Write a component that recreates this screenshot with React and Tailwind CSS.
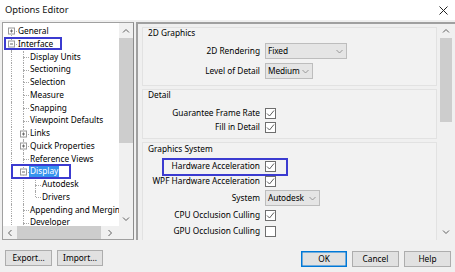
import React from "react";

const LINE = "border-[#a8a8a8] border-dotted";

function PMBox({ sign }) {
  return (
    <div className="absolute left-[3px] top-1/2 -translate-y-1/2 w-[7px] h-[7px] border border-[#9a9a9a] bg-white flex items-center justify-center">
      <div className="relative w-[3px] h-[3px] flex items-center justify-center">
        <div className="w-[3px] h-[1px] bg-[#6a6a6a]" />
        {sign === "+" && <div className="absolute left-[1px] top-0 w-[1px] h-[3px] bg-[#6a6a6a]" />}
      </div>
    </div>
  );
}

function TreeRow({ label, guides = [], first, last, box, selected }) {
  return (
    <div className="flex h-[12.77px] whitespace-nowrap shrink-0">
      {guides.map((g, i) => (
        <div key={i} className="relative w-[12px] shrink-0">
          {g && <div className={`absolute left-[6px] top-0 bottom-0 border-l ${LINE}`} />}
        </div>
      ))}
      <div className="relative w-[12px] shrink-0">
        {!first && <div className={`absolute left-[6px] top-0 h-1/2 border-l ${LINE}`} />}
        {!last && <div className={`absolute left-[6px] top-1/2 bottom-0 border-l ${LINE}`} />}
        <div className={`absolute left-[7px] right-0 top-1/2 border-t ${LINE}`} />
        {box && <PMBox sign={box} />}
      </div>
      <span
        className={
          selected
            ? "ml-[0px] px-[1px] leading-[12.77px] bg-[#3593ee] text-white"
            : "ml-[1px] leading-[12.77px] text-black"
        }
      >
        {label}
      </span>
    </div>
  );
}

function Chevron({ dir = "down", color = "#707070" }) {
  const d = {
    up: "M1 4.5 L4 1.5 L7 4.5",
    down: "M1 1.5 L4 4.5 L7 1.5",
    left: "M4.5 1 L1.5 4 L4.5 7",
    right: "M1.5 1 L4.5 4 L1.5 7",
  }[dir];
  const vert = dir === "up" || dir === "down";
  return (
    <svg width={vert ? 8 : 6} height={vert ? 6 : 8} viewBox={vert ? "0 0 8 6" : "0 0 6 8"}>
      <path d={d} fill="none" stroke={color} strokeWidth="1" />
    </svg>
  );
}

function SmallChevron() {
  return (
    <svg width="7" height="5" viewBox="0 0 7 5">
      <path d="M0.5 1 L3.5 4 L6.5 1" fill="none" stroke="#8f8f8f" strokeWidth="0.9" />
    </svg>
  );
}

function Check({ checked }) {
  return (
    <div className="w-[11px] h-[11px] border border-[#6e6e6e] bg-white flex items-center justify-center">
      {checked && (
        <svg width="9" height="9" viewBox="0 0 9 9">
          <path d="M1 4.5 L3.5 7 L8 1.5" fill="none" stroke="#5c5c5c" strokeWidth="1" />
        </svg>
      )}
    </div>
  );
}

function Select({ value, w }) {
  return (
    <div className={`${w} h-[16px] bg-[#e5e5e5] border border-[#bdbdbd] flex items-center justify-between pl-[2px] pr-[3px]`}>
      <span className="leading-none tracking-[-0.1px]">{value}</span>
      <SmallChevron />
    </div>
  );
}

function Row({ label, h, children }) {
  return (
    <div className={`flex items-center ${h}`}>
      <div className="w-[117px] shrink-0 text-right whitespace-nowrap">{label}</div>
      <div className="ml-[5px] flex items-center">{children}</div>
    </div>
  );
}

function Btn({ children, w, primary }) {
  return (
    <div
      className={`${w} h-[16px] flex items-center justify-center bg-[#e1e1e1] border ${
        primary ? "border-[#0078d7] shadow-[inset_0_0_0_0.5px_#0078d7]" : "border-[#adadad]"
      }`}
    >
      {children}
    </div>
  );
}

export default function App() {
  return (
    <div className="relative w-[455px] h-[272px] overflow-hidden bg-[#f0f0f0] font-['Noto_Sans',sans-serif] text-[8.3px] text-black flex flex-col">
      {/* Title bar */}
      <div className="h-[20px] bg-white flex items-center justify-between pl-[5px] pr-[7px] shrink-0">
        <span className="text-[9.4px] leading-none text-[#111]">Options Editor</span>
        <svg width="9" height="9" viewBox="0 0 9 9">
          <path d="M0.5 0.5 L8.5 8.5 M8.5 0.5 L0.5 8.5" stroke="#222" strokeWidth="1" />
        </svg>
      </div>

      {/* Main */}
      <div className="flex pt-[2px] pl-[2px] gap-[2px] h-[220px] shrink-0">
        {/* Tree panel */}
        <div className="w-[132px] h-[218px] border border-[#a0a0a0] border-r-[#8c8c8c] bg-white flex flex-col shrink-0">
          <div className="flex flex-1 min-h-0">
            <div className="flex-1 min-w-0 overflow-hidden pt-[2px] pl-[2px] flex flex-col">
              <TreeRow label="General" first box="+" />
              <TreeRow label="Interface" box="-" />
              <TreeRow label="Display Units" guides={[true]} />
              <TreeRow label="Sectioning" guides={[true]} />
              <TreeRow label="Selection" guides={[true]} />
              <TreeRow label="Measure" guides={[true]} />
              <TreeRow label="Snapping" guides={[true]} />
              <TreeRow label="Viewpoint Defaults" guides={[true]} />
              <TreeRow label="Links" guides={[true]} box="+" />
              <TreeRow label="Quick Properties" guides={[true]} box="+" />
              <TreeRow label="Reference Views" guides={[true]} />
              <TreeRow label="Display" guides={[true]} box="-" selected />
              <TreeRow label="Autodesk" guides={[true, true]} />
              <TreeRow label="Drivers" guides={[true, true]} last />
              <TreeRow label="Appending and Merging" guides={[true]} />
              <TreeRow label="Developer" guides={[true]} />
            </div>
            {/* vertical scrollbar */}
            <div className="w-[14px] bg-[#f0f0f0] flex flex-col items-center shrink-0">
              <div className="h-[15px] flex items-center justify-center">
                <Chevron dir="up" color="#606060" />
              </div>
              <div className="w-[14px] h-[105px] bg-[#cdcdcd]" />
              <div className="flex-1" />
              <div className="h-[14px] flex items-center justify-center">
                <Chevron dir="down" color="#606060" />
              </div>
            </div>
          </div>
          {/* horizontal scrollbar */}
          <div className="h-[13px] flex shrink-0">
            <div className="flex-1 bg-[#f0f0f0] flex items-center">
              <div className="w-[14px] flex items-center justify-center">
                <Chevron dir="left" color="#606060" />
              </div>
              <div className="w-[84px] h-[13px] bg-[#cdcdcd]" />
              <div className="flex-1 flex items-center justify-center">
                <Chevron dir="right" color="#606060" />
              </div>
            </div>
            <div className="w-[14px] bg-[#f0f0f0]" />
          </div>
        </div>

        {/* Right panel */}
        <div className="flex-1 h-[218px] border-l-2 border-t-2 border-[#a0a0a0] flex bg-[#f0f0f0]">
          <div className="flex-1 min-w-0 pl-[4px] pr-[1px] pt-[3px] flex flex-col gap-[3px] overflow-hidden">
            {/* 2D Graphics */}
            <div className="h-[59px] border border-[#e2e2e2] bg-[#f2f2f2] shrink-0 flex flex-col">
              <div className="h-[10px] pl-[5px] flex items-center">2D Graphics</div>
              <div className="mt-[5px] flex flex-col gap-[4px]">
                <Row label="2D Rendering" h="h-[16px]">
                  <Select value="Fixed" w="w-[82px]" />
                </Row>
                <Row label="Level of Detail" h="h-[16px]">
                  <Select value="Medium" w="w-[48px]" />
                </Row>
              </div>
            </div>
            {/* Detail */}
            <div className="h-[50px] border border-[#e2e2e2] bg-[#f2f2f2] shrink-0 flex flex-col">
              <div className="h-[11px] pl-[5px] flex items-center">Detail</div>
              <div className="mt-[5px] flex flex-col">
                <Row label="Guarantee Frame Rate" h="h-[14px]">
                  <Check checked />
                </Row>
                <Row label="Fill in Detail" h="h-[14px]">
                  <Check checked />
                </Row>
              </div>
            </div>
            {/* Graphics System */}
            <div className="h-[110px] border border-[#e2e2e2] bg-[#f2f2f2] shrink-0 flex flex-col">
              <div className="h-[13px] pl-[5px] flex items-center">Graphics System</div>
              <div className="mt-[3px] flex flex-col">
                <Row label="Hardware Acceleration" h="h-[15px]">
                  <Check checked />
                </Row>
                <Row label="WPF Hardware Acceleration" h="h-[15px]">
                  <Check checked />
                </Row>
                <Row label="System" h="h-[18px]">
                  <Select value="Autodesk" w="w-[55px]" />
                </Row>
                <Row label="CPU Occlusion Culling" h="h-[17px]">
                  <Check checked />
                </Row>
                <Row label="GPU Occlusion Culling" h="h-[15px]">
                  <Check />
                </Row>
              </div>
            </div>
          </div>
          {/* right vertical scrollbar */}
          <div className="w-[15px] mr-[2px] bg-[#f0f0f0] flex flex-col items-center shrink-0">
            <div className="h-[14px] flex items-center justify-center">
              <Chevron dir="up" color="#606060" />
            </div>
            <div className="w-[12px] h-[84px] bg-[#cdcdcd]" />
            <div className="flex-1" />
            <div className="h-[16px] flex items-center justify-center">
              <Chevron dir="down" color="#606060" />
            </div>
          </div>
        </div>
      </div>

      {/* Bottom buttons */}
      <div className="flex items-start pt-[10px] pl-[5px] pr-[4px]">
        <div className="flex gap-[5px]">
          <Btn w="w-[47px]">Export...</Btn>
          <Btn w="w-[46px]">Import...</Btn>
        </div>
        <div className="flex-1" />
        <div className="flex gap-[5px] mt-[1px]">
          <Btn w="w-[46px]" primary>OK</Btn>
          <Btn w="w-[47px]">Cancel</Btn>
          <Btn w="w-[47px]">Help</Btn>
        </div>
      </div>

      {/* Annotation highlight boxes */}
      <div className="absolute left-[4px] top-[37px] w-[58px] h-[13px] border-2 border-[#3b3bd0] pointer-events-none" />
      <div className="absolute left-[11px] top-[164px] w-[60px] h-[15px] border-2 border-[#3b3bd0] pointer-events-none" />
      <div className="absolute left-[162px] top-[158px] w-[126px] h-[18px] border-2 border-[#3b3bd0] pointer-events-none" />
    </div>
  );
}
